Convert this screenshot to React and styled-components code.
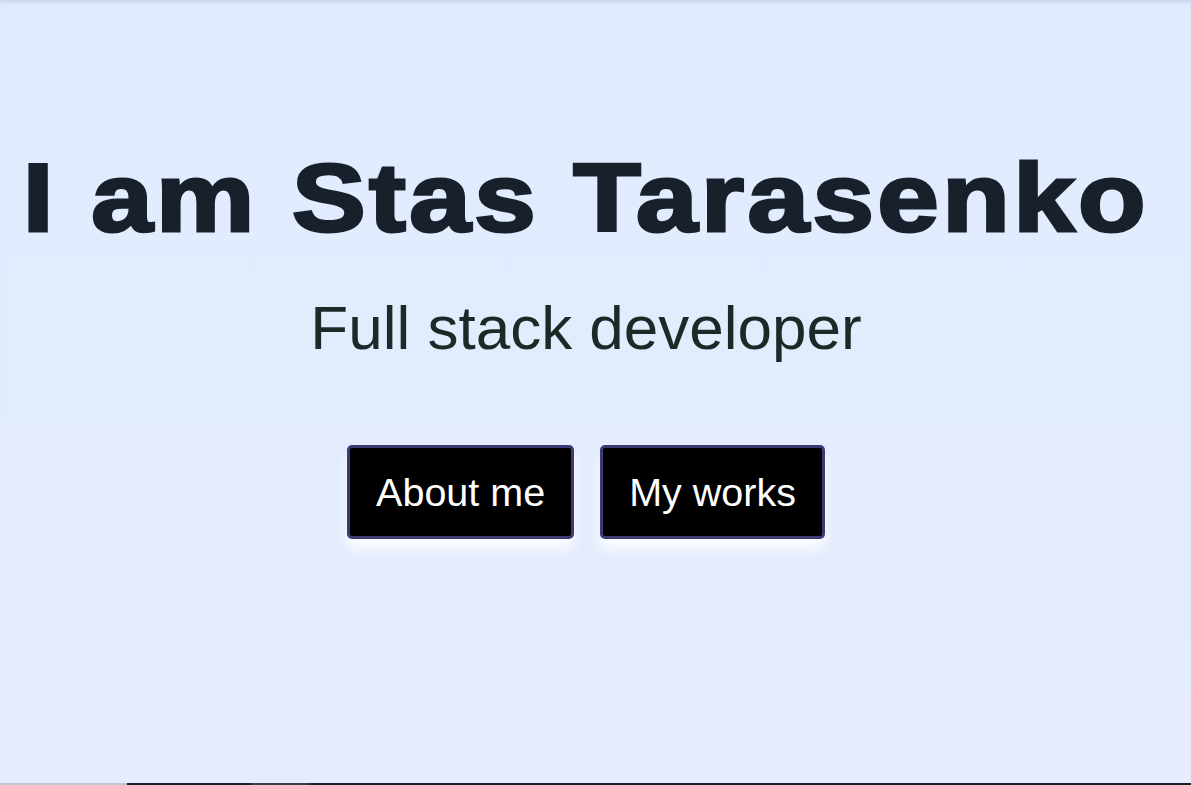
import React from 'react'
import styled, { createGlobalStyle } from 'styled-components'

const GlobalStyle = createGlobalStyle`
  html, body {
    margin: 0;
    padding: 0;
    overflow: hidden;
  }
  body {
    font-family: "Liberation Sans", Arial, sans-serif;
    background: #e6ecfc;
  }
`

const Hero = styled.section`
  height: 783px;
  box-sizing: border-box;
  padding: 142px 19px 0 0;
  display: flex;
  flex-direction: column;
  align-items: center;
  background: linear-gradient(180deg, #dfebfe 0%, #e3ecfd 50%, #e6ecfc 100%);
  box-shadow: inset 0 5px 5px -3px rgba(120, 140, 180, 0.25);
`

const Title = styled.h1`
  margin: 0;
  font-size: 97px;
  line-height: 1.15;
  font-weight: 700;
  letter-spacing: 3px;
  color: #17202b;
  -webkit-text-stroke: 3px #17202b;
  white-space: nowrap;
  transform: scaleX(1.14);
`

const Subtitle = styled.p`
  margin: 38px 0 0;
  font-size: 62px;
  line-height: 1.15;
  color: #1b2a27;
`

const Actions = styled.div`
  display: flex;
  gap: 26px;
  margin-top: 82px;
`

const Button = styled.a`
  display: block;
  padding: 22px 26px;
  font-size: 39.5px;
  line-height: 44px;
  color: #fff;
  background: #000;
  border: 3px solid #3b3a74;
  border-radius: 5px;
  text-decoration: none;
  box-shadow: 0 10px 12px rgba(255, 255, 255, 0.85);
  cursor: pointer;
`

const NextSection = styled.div`
  display: flex;
  height: 40px;
  background: #1b1e24;
`

const Segment = styled.div`
  width: ${({ w }) => w}px;
  background: ${({ bg }) => bg};
`

export default function App() {
  return (
    <>
      <GlobalStyle />
      <Hero>
        <Title>I am Stas Tarasenko</Title>
        <Subtitle>Full stack developer</Subtitle>
        <Actions>
          <Button href="#about">About me</Button>
          <Button href="#works">My works</Button>
        </Actions>
      </Hero>
      <NextSection>
        <Segment w={127} bg="#c2c5cb" />
        <Segment w={124} bg="#1b1e24" />
        <Segment w={56} bg="#3b3e45" />
        <Segment w={5} bg="#2a2d33" />
      </NextSection>
    </>
  )
}
